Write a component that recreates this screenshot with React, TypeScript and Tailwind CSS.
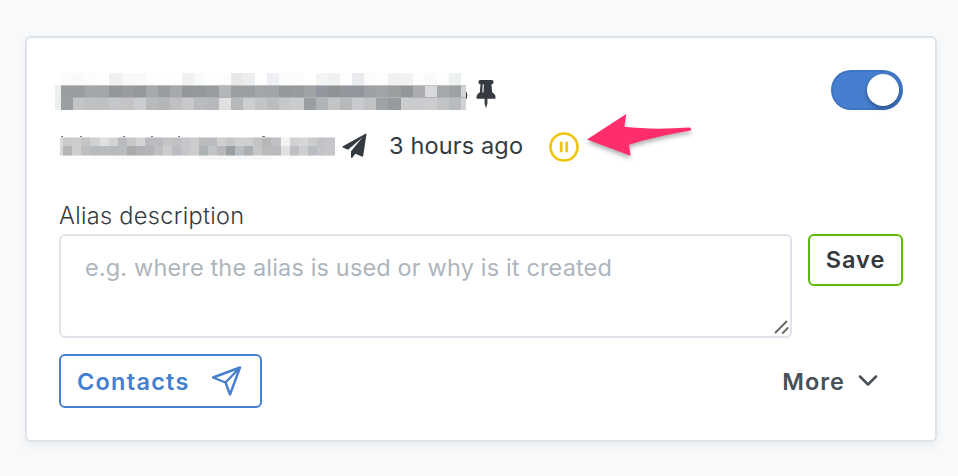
const TITLE_ROWS = [
  "fbfbfb fafafa fcfcfc ffffff f0f0f0 f9f9f9 f9f9f9 fdfdfd fdfdfd ffffff f1f1f1 f9fafa fdfdfd fdfdfd e8e8e8 ebedef ffffff eef0f3 fafbfb fcfcfc ffffff f2f5f4 eff2f1 fdfdfd e9ebee fcfcfc fdfdfd f1f1f1 f2f2f2 fdfdfd fafafa fdfdfd edf1f0 ffffff",
  "9a9da0 9a9da0 a3a7aa a3a6a9 93979b 9a9da0 94989a a5a9ac 999da0 a6a9ad 92979b 94999c 989c9f b4b5ba 9a9ea1 9b9fa1 a2a6a9 a2a5a8 96999c 979b9e 9fa3a6 93969e 8e9294 93969d 93959d 9da0a4 a0a4a6 9b9fa0 919698 a9abae d8d9dd a5a9ab 9da1a4 d3d3d5",
  "9a9fa2 c3c4c6 bfc0c2 bfc0c1 c5c6c9 c4c4c6 cccdd0 b8b9bb b5b6b7 c0c0c2 c8c8cb babbbe b7b8bd e0e2e1 b6b7b8 cdced0 c3c4c6 bcbdbf c6c7c9 cbccce 9a9ea1 b0b4b7 c3c4c5 b8b9bb c9cacd c1c2c4 9fa3a7 979b9e cbccce cbccd0 cccdce c3c4c6 b9bcbf d3d3d5",
].map((r) => r.split(" "));

const MAIL_ROWS = [
  "c9cacb cccccc c3c4c6 d0d1d2 e0e1e2 d3d5d4 b9babd c8c9cb d5d4d6 babbbf babbbf c3c4c6 bfc0c2 c6c7ca cccdcf babcbe b9bbbe d0d0d2 c6c7c9 cecfd1 cecece c3c4c6 b6b7b9 bfc0c3 f2f2f2 d2d2d4 d5d7d6 cccccf c2c3c5 c5c6c9",
  "b4b5b7 ccced0 bdbfc1 b8bbbd b8bcbd b6babc b9bcbe a9abad b0b2b5 b3b4b7 bdbfc2 cccccc babcc1 c5c6c9 cccccc adb2b5 c1c4c7 b7b8ba 999ea1 b7bdc0 abaeb1 c5c6c8 b9bbbd babbbd dfe0e2 bdbfc2 cdced0 b9bcc1 c3c4c7 c6c6c9",
].map((r) => r.split(" "));

function TitleMosaic() {
  const edge = (i: number) => Math.min(411, Math.round(5.9 + i * 12.13));
  const tops = [3, 15, 27, 40];
  return (
    <svg width="413" height="40" className="-ml-1 shrink-0">
      <g shapeRendering="crispEdges">
        <rect x="0" y="15" width="6" height="25" fill="#edefee" />
        {TITLE_ROWS.map((row, y) =>
          row.map((c, x) => (
            <rect key={`${x}-${y}`} x={edge(x)} y={tops[y]} width={edge(x + 1) - edge(x)} height={tops[y + 1] - tops[y]} fill={`#${c}`} />
          )),
        )}
        <rect x="6" y="15" width="405" height="1" fill="#bfc1c3" />
        <rect x="18" y="27" width="393" height="1" fill="#b0b2b4" />
      </g>
      <path d="M411 21q2.500 4 0 9z" fill="#343a40" />
    </svg>
  );
}

function MailMosaic() {
  const edge = (i: number) => Math.round(4.3 + i * 9.05);
  return (
    <svg width="276" height="40" className="shrink-0" shapeRendering="crispEdges">
      <rect x="1" y="11" width="4" height="19" fill="#d9d9da" />
      {MAIL_ROWS.map((row, y) =>
        row.map((c, x) => (
          <rect key={`${x}-${y}`} x={edge(x)} y={11 + y * 9} width={edge(x + 1) - edge(x)} height={y ? 10 : 9} fill={`#${c}`} />
        )),
      )}
      <rect x="1" y="11" width="275" height="1" fill="#ffffff" opacity="0.45" />
      <rect x="1" y="29" width="275" height="1" fill="#ffffff" opacity="0.45" />
      <rect x="4" y="30" width="90" height="4" fill="#fcfcfc" />
      <rect x="140" y="30" width="72" height="4" fill="#f8f8f9" />
      <rect x="222" y="30" width="45" height="4" fill="#fcfcfc" />
      {[2, 21, 64, 92, 119].map((x) => (
        <rect key={x} x={x} y="10" width="2" height="1" fill="#777b80" />
      ))}
      <rect x="203" y="10" width="3" height="1" fill="#777b80" />
    </svg>
  );
}

function Pin() {
  return (
    <svg width="20" height="30" viewBox="0 0 20 30" className="shrink-0" fill="#343a40">
      <path
        fillRule="evenodd"
        d="M4.200 1h11.600q1.700 0 1.700 1.700v.8q0 1.700-1.700 1.700h-.3l.6 8q3.300 1.700 3.500 5.300 0 1.300-1.200 1.300H1.600Q.4 19.800.4 18.500q.2-3.600 3.500-5.300l.6-8h-.3q-1.700 0-1.700-1.700v-.8Q2.500 1 4.200 1zM6.700 5.200l-.4 8.300h1.200l.3-8.300z"
      />
      <path d="M8.600 19h2.800v5.500L10 29.200l-1.400-4.700z" />
    </svg>
  );
}

export default function App() {
  return (
    <div className="h-[476px] w-[958px] bg-[#f8f9fb] pl-[25px] pt-9 font-['Inter',sans-serif] text-[23.5px] text-[#343a40]">
      <main className="h-[406px] w-[912px] rounded-[6px] border-2 border-[#dfe4eb] bg-white px-8 pt-8 shadow-[0_4px_9px_rgba(0,0,0,0.06)]">
        <div className="flex h-10 items-center justify-between">
          <div className="flex items-center">
            <TitleMosaic />
            <div className="pl-[7.5px] pt-[7px]"><Pin /></div>
          </div>
          <button className="flex h-10 w-[72px] items-center justify-end rounded-full bg-[#467fcf] pr-1 shadow-[inset_0_0_0_2px_rgba(0,40,100,0.12)]" aria-label="Enabled">
            <span className="h-8 w-8 rounded-full bg-white shadow-[0_2px_4px_rgba(0,0,0,0.4)]" />
          </button>
        </div>

        <div className="mt-4 flex h-10 items-center">
          <MailMosaic />
          <svg width="25" height="26" viewBox="0 0 25 26" className="ml-[7px] shrink-0" fill="#343a40">
            <path d="M24 .5.800 13.200q-1 .8 0 1.300L6 16.800 20.200 4.800 9 18.300V24q.3 1.500 1.300.7l3-3.900 6.500 2.700q1.200.300 1.400-.8L24.500 1q0-.7-.5-.5z" />
          </svg>
          <span className="ml-[22px] w-[136px] whitespace-nowrap tracking-[0.14px]">3 hours ago</span>
          <svg width="30" height="30" viewBox="0 0 30 30" className="ml-6 mt-px shrink-0" fill="none" stroke="#f1c40f">
            <circle cx="15" cy="15" r="13.500" strokeWidth="2.600" />
            <path d="M12.200 11v8M17.700 11v8" strokeWidth="2.800" strokeLinecap="round" />
          </svg>
          <svg width="108" height="50" viewBox="0 0 108 50" className="-mt-[20px] ml-[7px] shrink-0 overflow-visible">
            <path d="M1 28.500 40.300 3 38.300 15.800Q65 19 103 16.600q2.700.3 2 3-38 6.400-62 14.200L44.500 44.800z" fill="#ff2d6c" className="drop-shadow-[0_3px_2px_rgba(0,0,0,0.3)]" />
          </svg>
        </div>

        <label className="mt-8 flex h-9 items-center pb-px font-light tracking-[0.32px]">Alias description</label>
        <div className="flex items-start justify-between">
          <div className="flex h-[104px] w-[733px] items-start justify-between rounded-[6px] border-2 border-[#dfe3ea] pl-6">
            <span className="pt-[14px] leading-9 tracking-[0.15px] text-[#adb5bd]">e.g. where the alias is used or why is it created</span>
            <svg width="16" height="16" viewBox="0 0 16 16" className="self-end" fill="none" stroke="#666" strokeWidth="1.800" strokeLinecap="round">
              <path d="m1.500 12.500 11-11M8.800 13l5-5" />
            </svg>
          </div>
          <button className="flex h-[52px] w-[95px] items-center justify-center rounded-[6px] border-2 border-[#5eba00] font-semibold tracking-[1px]">Save</button>
        </div>

        <div className="mt-4 flex items-center justify-between">
          <button className="flex h-[54px] w-[203px] items-center rounded-[6px] border-2 border-[#467fcf] pl-4 font-semibold tracking-[1.25px] text-[#467fcf]">
            <span className="w-[135px] pt-px text-left">Contacts</span>
            <svg width="30" height="30" viewBox="0 0 30 30" className="-mt-px" fill="none" stroke="#467fcf" strokeWidth="2.400" strokeLinejoin="round">
              <path d="M28 1.500 1 11.500l12.500 5L18 28.500zM13.500 16.500 28 1.500" />
            </svg>
          </button>
          <button className="mr-[25px] flex items-center pt-px font-semibold tracking-[1px] text-[#495057]">
            <span>More</span>
            <svg width="20" height="12" viewBox="0 0 20 12" className="ml-[13px] -mt-px" fill="none" stroke="#495057" strokeWidth="2.500" strokeLinecap="round" strokeLinejoin="round">
              <path d="m2 1.500 8 8 8-8" />
            </svg>
          </button>
        </div>
      </main>
    </div>
  );
}
